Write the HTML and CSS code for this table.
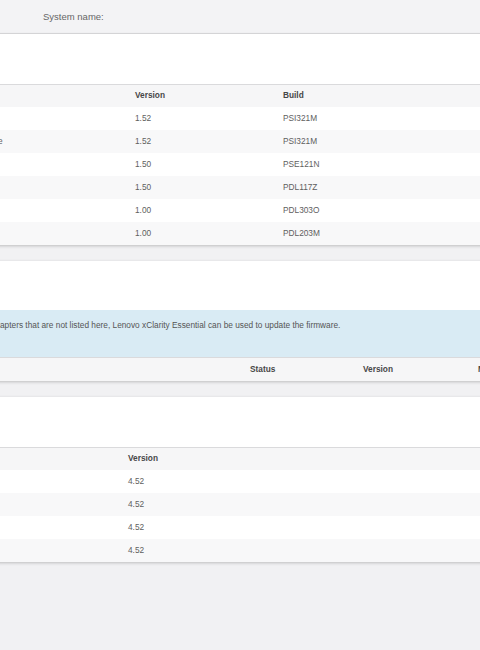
FILE: index.html
```
<!DOCTYPE html>
<html>
<head>
<meta charset="utf-8">
<link rel="stylesheet" href="styles.css">
</head>
<body>
<div class="viewport">
  <div class="page">
    <div class="topbar"><span class="sysname">System name:</span></div>

    <section class="card">
      <div class="card-head"></div>
      <div class="grid fw">
        <div class="row head"><span></span><span>Status</span><span>Version</span><span>Build</span><span></span></div>
        <div class="row"><span></span><span>Active</span><span>1.52</span><span>PSI321M</span><span></span></div>
        <div class="row"><span></span><span>Inactive</span><span>1.52</span><span>PSI321M</span><span></span></div>
        <div class="row"><span></span><span></span><span>1.50</span><span>PSE121N</span><span></span></div>
        <div class="row"><span></span><span></span><span>1.50</span><span>PDL117Z</span><span></span></div>
        <div class="row"><span></span><span></span><span>1.00</span><span>PDL303O</span><span></span></div>
        <div class="row"><span></span><span></span><span>1.00</span><span>PDL203M</span><span></span></div>
      </div>
    </section>

    <section class="card">
      <div class="card-head"></div>
      <div class="info"><p>For adapters that are not listed here, Lenovo xClarity Essential can be used to update the firmware.</p></div>
      <div class="grid adapters">
        <div class="row head"><span></span><span>Status</span><span>Version</span><span>M</span></div>
      </div>
    </section>

    <section class="card">
      <div class="card-head"></div>
      <div class="grid pci">
        <div class="row head"><span></span><span>Version</span></div>
        <div class="row"><span></span><span>4.52</span></div>
        <div class="row"><span></span><span>4.52</span></div>
        <div class="row"><span></span><span>4.52</span></div>
        <div class="row"><span></span><span>4.52</span></div>
      </div>
    </section>
  </div>
</div>
</body>
</html>
```

FILE: styles.css
```
html, body {
  margin: 0;
  padding: 0;
  background: #f1f1f3;
  font-family: "Liberation Sans", Arial, sans-serif;
  color: #5a5a5a;
  overflow: hidden;
}

.viewport {
  width: 480px;
  height: 650px;
  overflow: hidden;
}

.page {
  width: 800px;
  margin-left: -120px;
}

.topbar {
  height: 33px;
  background: #f3f3f5;
  border-bottom: 1px solid #dcdcde;
  display: flex;
  align-items: center;
  padding-left: 163px;
}

.sysname {
  font-size: 9.5px;
  color: #666;
}

.card {
  background: #fff;
  box-shadow: 0 1px 3px rgba(0, 0, 0, 0.22);
  margin-bottom: 16px;
}

.card-head {
  height: 50px;
}

.row {
  display: grid;
  height: 23px;
  align-items: center;
  font-size: 8.3px;
  line-height: 10px;
  padding-bottom: 1px;
  box-sizing: border-box;
  color: #5e5e5e;
}

.row:nth-child(odd) {
  background: #f8f8f9;
}

.row.head {
  background: #f6f6f7;
  border-top: 1px solid #dadadc;
  height: 23px;
  padding-bottom: 2px;
  font-weight: bold;
  color: #474747;
}

.fw .row {
  grid-template-columns: 94px 161px 148px 148px 1fr;
}

.adapters .row {
  grid-template-columns: 370px 113px 115px 1fr;
}

.adapters .row.head {
  height: 24px;
}

.pci .row {
  grid-template-columns: 248px 1fr;
}

.info {
  background: #d9ebf4;
  height: 47px;
  padding-left: 96px;
  box-sizing: border-box;
  margin-top: -1px;
}

.info p {
  margin: 0;
  padding-top: 10px;
  font-size: 8.3px;
  line-height: 10px;
  color: #555;
}
```
